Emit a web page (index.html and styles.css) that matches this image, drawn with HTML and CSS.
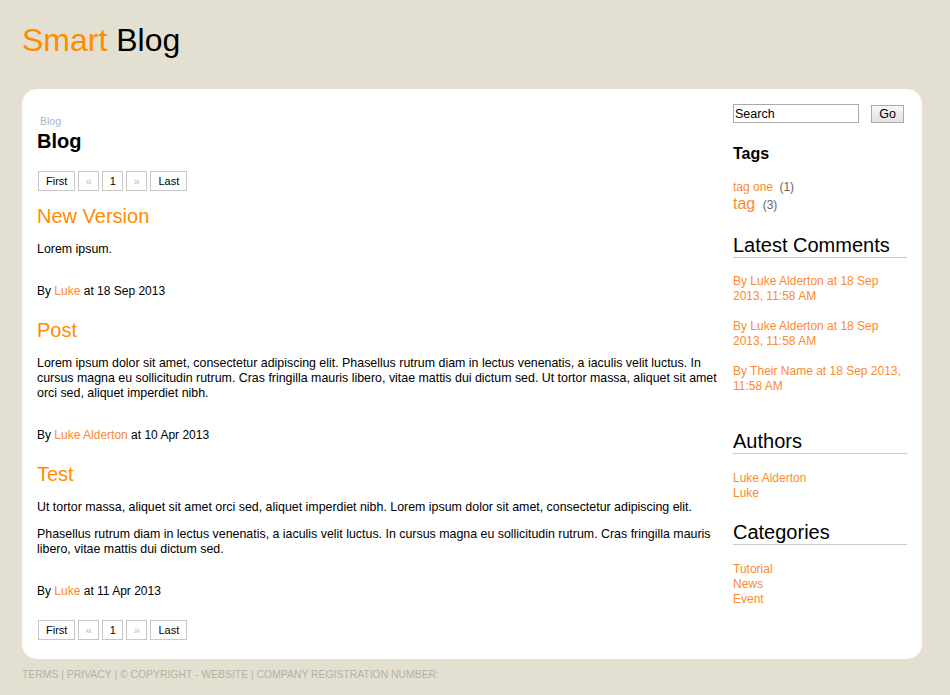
FILE: index.html
```html
<!DOCTYPE html>
<html>
<head>
  <title>Smart Blog</title>
  <link rel="stylesheet" href="styles.css">
</head>
<body>
  <div class="header">
    <h1 class="logo"><span class="logo-smart">Smart</span> Blog</h1>
  </div>
  <div class="page">
    <div class="main">
      <div class="breadcrumb">Blog</div>
      <h1 class="page-title">Blog</h1>
      <div class="pager">
        <span class="pager-btn">First</span>
        <span class="pager-btn short disabled">&laquo;</span>
        <span class="pager-btn short">1</span>
        <span class="pager-btn short disabled">&raquo;</span>
        <span class="pager-btn">Last</span>
      </div>

      <div class="post">
        <h2 class="post-title">New Version</h2>
        <p>Lorem ipsum.</p>
        <p class="byline">By <a href="#">Luke</a> at 18 Sep 2013</p>
      </div>

      <div class="post">
        <h2 class="post-title">Post</h2>
        <p>Lorem ipsum dolor sit amet, consectetur adipiscing elit. Phasellus rutrum diam in lectus venenatis, a iaculis velit luctus. In cursus magna eu sollicitudin rutrum. Cras fringilla mauris libero, vitae mattis dui dictum sed. Ut tortor massa, aliquet sit amet orci sed, aliquet imperdiet nibh.</p>
        <p class="byline">By <a href="#">Luke Alderton</a> at 10 Apr 2013</p>
      </div>

      <div class="post">
        <h2 class="post-title">Test</h2>
        <p>Ut tortor massa, aliquet sit amet orci sed, aliquet imperdiet nibh. Lorem ipsum dolor sit amet, consectetur adipiscing elit.</p>
        <p>Phasellus rutrum diam in lectus venenatis, a iaculis velit luctus. In cursus magna eu sollicitudin rutrum. Cras fringilla mauris libero, vitae mattis dui dictum sed.</p>
        <p class="byline">By <a href="#">Luke</a> at 11 Apr 2013</p>
      </div>

      <div class="pager pager-bottom">
        <span class="pager-btn">First</span>
        <span class="pager-btn short disabled">&laquo;</span>
        <span class="pager-btn short">1</span>
        <span class="pager-btn short disabled">&raquo;</span>
        <span class="pager-btn">Last</span>
      </div>
    </div>

    <div class="sidebar">
      <div class="search">
        <input class="search-input" type="text" value="Search">
        <button class="search-btn">Go</button>
      </div>

      <h3 class="tags-title">Tags</h3>
      <div class="tags">
        <div class="tag-small"><a href="#">tag one</a> <span class="count">(1)</span></div>
        <div class="tag-big"><a href="#">tag</a> <span class="count">(3)</span></div>
      </div>

      <h3 class="side-title">Latest Comments</h3>
      <ul class="comments">
        <li><a href="#">By Luke Alderton at 18 Sep 2013, 11:58 AM</a></li>
        <li><a href="#">By Luke Alderton at 18 Sep 2013, 11:58 AM</a></li>
        <li><a href="#">By Their Name at 18 Sep 2013, 11:58 AM</a></li>
      </ul>

      <h3 class="side-title authors-title">Authors</h3>
      <ul class="links">
        <li><a href="#">Luke Alderton</a></li>
        <li><a href="#">Luke</a></li>
      </ul>

      <h3 class="side-title categories-title">Categories</h3>
      <ul class="links">
        <li><a href="#">Tutorial</a></li>
        <li><a href="#">News</a></li>
        <li><a href="#">Event</a></li>
      </ul>
    </div>
  </div>
  <div class="footer">
    Terms | Privacy | &copy; Copyright - Website | Company Registration Number:
  </div>
</body>
</html>
```
FILE: styles.css
```css
body {
  margin: 0;
  padding: 0 22px;
  background-color: #e3e0d2;
  font-family: "Liberation Sans", Arial, sans-serif;
  font-size: 12px;
  color: #000;
}

a {
  color: #fa8a32;
  text-decoration: none;
}

.header {
  padding-top: 21px;
}

.logo {
  margin: 0;
  font-size: 32px;
  font-weight: normal;
  line-height: 38px;
  color: #000;
}

.logo-smart {
  color: #ff8c00;
}

.page {
  width: 870px;
  margin-top: 30px;
  padding: 15px 15px 19px 15px;
  background-color: #fff;
  border-radius: 15px;
  display: flex;
  gap: 11px;
}

.main {
  width: 685px;
  padding-top: 11px;
}

.breadcrumb {
  font-size: 10.5px;
  line-height: 12px;
  color: #a9b6c9;
  padding-left: 3px;
}

.page-title {
  margin: 2px 0 0 0;
  font-size: 20px;
  line-height: 24px;
  font-weight: bold;
}

.pager {
  display: flex;
  gap: 3px;
  margin-top: 18px;
  margin-left: 1px;
}

.pager-btn {
  display: inline-block;
  height: 18px;
  line-height: 18px;
  padding: 0 7px;
  border: 1px solid #c8c8c8;
  font-size: 11px;
  text-align: center;
}

.pager-btn.short {
  width: 7px;
  padding: 0 6px;
}

.pager-btn.disabled {
  color: #bbb;
}

.pager-bottom {
  margin-top: 21px;
}

.post-title {
  margin: 13px 0 14px 0;
  font-size: 20px;
  line-height: 24px;
  font-weight: normal;
  color: #ff8c00;
}

.post {
  margin-bottom: 19px;
}

.post:last-of-type {
  margin-bottom: 0;
}

.post p {
  margin: 0 0 12px 0;
  font-size: 12.4px;
  line-height: 15px;
}

.post .byline {
  margin: 27px 0 0 0;
  font-size: 12px;
}

.sidebar {
  width: 174px;
}

.search {
  display: flex;
  align-items: flex-start;
  gap: 12px;
}

.search-input {
  width: 122px;
  height: 17px;
  padding: 0 1px;
  margin: 0;
  border: 1px solid #aaa;
  font-family: "Liberation Sans", Arial, sans-serif;
  font-size: 12.5px;
  box-sizing: content-box;
}

.search-btn {
  width: 33px;
  height: 18px;
  padding: 0;
  margin: 1px 0 0 0;
  border: 1px solid #aaa;
  background: linear-gradient(#f6f6f6, #e2e2e2);
  font-family: "Liberation Sans", Arial, sans-serif;
  font-size: 12.5px;
  line-height: 15px;
}

.tags-title {
  margin: 21px 0 0 0;
  font-size: 16px;
  line-height: 20px;
  font-weight: bold;
}

.tags {
  margin-top: 16px;
}

.tag-small {
  line-height: 15px;
}

.tag-big {
  font-size: 16px;
  line-height: 18px;
}

.tag-small .count,
.tag-big .count {
  color: #666;
  font-size: 12px;
  margin-left: 3px;
}

.side-title {
  margin: 19px 0 0 0;
  font-size: 20px;
  line-height: 24px;
  font-weight: normal;
  border-bottom: 1px solid #ccc;
}

.authors-title {
  margin-top: 35px;
}

.categories-title {
  margin-top: 19px;
}

.comments,
.links {
  list-style: none;
  margin: 16px 0 0 0;
  padding: 0;
  line-height: 15px;
}

.links {
  margin-top: 17px;
}

.comments li {
  margin-bottom: 15px;
}

.comments li:last-child {
  margin-bottom: 0;
}

.footer {
  margin-top: 9px;
  font-size: 10.4px;
  line-height: 13px;
  color: #b3b0a3;
  text-transform: uppercase;
}
```
